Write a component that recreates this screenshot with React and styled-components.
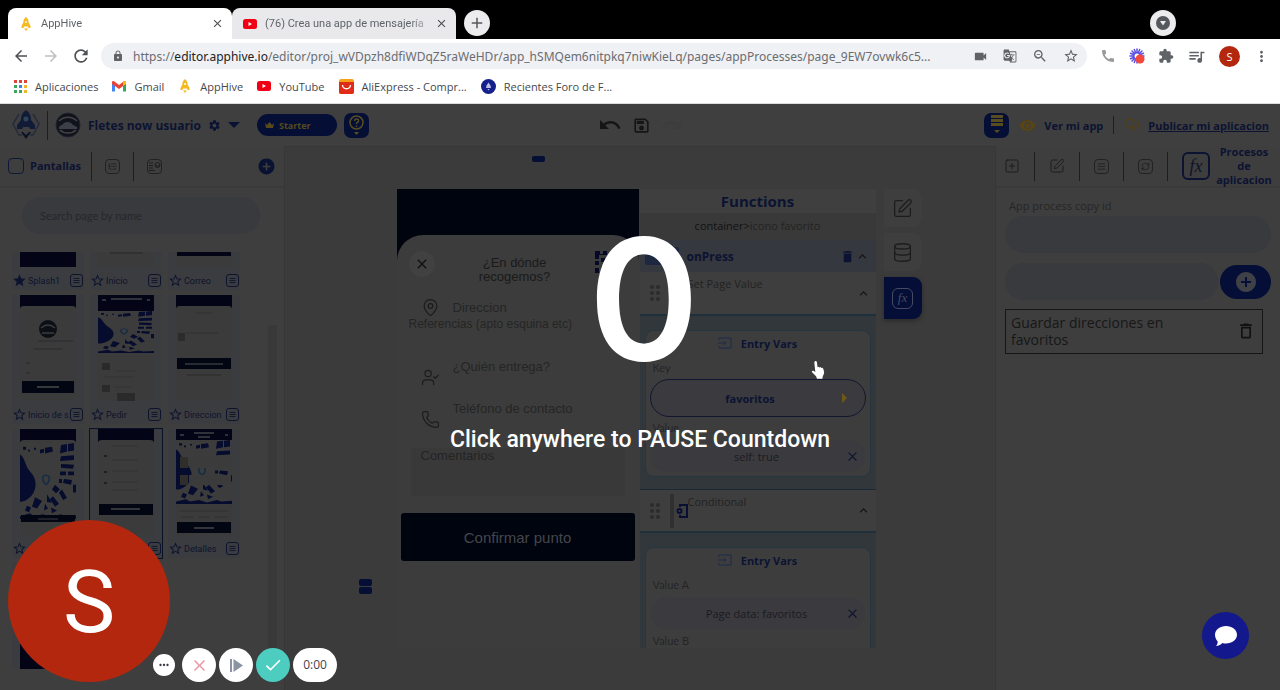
import styled, { createGlobalStyle } from 'styled-components';
import {
  MdAdd,
  MdAddCircle,
  MdArrowBack,
  MdArrowForward,
  MdArrowRight,
  MdCall,
  MdCheck,
  MdClose,
  MdDelete,
  MdDeleteOutline,
  MdDragIndicator,
  MdExtension,
  MdGTranslate,
  MdKeyboardArrowUp,
  MdLock,
  MdMoreHoriz,
  MdMoreVert,
  MdOutlineSave,
  MdQueueMusic,
  MdRefresh,
  MdSettings,
  MdStar,
  MdStarBorder,
  MdVideocam,
  MdVisibility,
  MdZoomOut,
  MdRedo,
  MdUndo,
} from 'react-icons/md';
import {
  CloudUpload,
  Database,
  ListTree,
  MapPin,
  Phone,
  RefreshCw,
  SquarePen,
  SquarePlus,
  TextAlignJustify,
  UserCheck,
} from 'lucide-react';

const PAGES = [
  [
    { name: 'Splash1', kind: 'splash', fav: true },
    { name: 'Inicio', kind: 'blank' },
    { name: 'Correo', kind: 'mail' },
  ],
  [
    { name: 'Inicio de s', kind: 'login' },
    { name: 'Pedir', kind: 'order' },
    { name: 'Direccion', kind: 'address' },
  ],
  [
    { name: '', kind: 'map' },
    { name: '', kind: 'point', active: true },
    { name: 'Detalles', kind: 'details' },
  ],
];

function App() {
  return (
    <Page>
      <GlobalStyle />
      <Browser />
      <Editor>
        <TopBar />
        <Work>
          <LeftPanel />
          <Canvas />
          <RightPanel />
        </Work>
        <Countdown type="button">
          <Count>0</Count>
          <CountText>Click anywhere to PAUSE Countdown</CountText>
        </Countdown>
        <Pointer viewBox="0 0 16 20">
          <path
            d="M4 1c1-1 2-.5 2.300.7L7 7l1-.6 1 .8 1.200-.4.9 1 1.200-.2.9 1.300.8 3.500c0 2-1 3-1.500 4.600l-.3 2.200H6.300L5.600 17 1.200 12.300c-.8-1 .3-2 1.400-1.500l2 1.200L3.500 2z"
            fill="#fff"
          />
        </Pointer>
        <Recorder />
        <Chat type="button" aria-label="Chat">
          <svg width="22" height="20" viewBox="0 0 22 20" fill="#fff">
            <path d="M11 0c6 0 11 3.800 11 8.700s-5 8.700-11 8.700c-1.300 0-2.500-.1-3.600-.5C5.800 18.600 3.800 19.600 1 20c1.400-1.500 1.800-3 1.600-4.800C1 13.600 0 11.200 0 8.700 0 3.800 5 0 11 0z" />
          </svg>
        </Chat>
      </Editor>
    </Page>
  );
}
export default App;

function Rocket({ size }) {
  return (
    <svg width={size} height={size} viewBox="0 0 14 14" fill="#f5b921">
      <path d="M7 0c2 1.500 2.600 3.300 2.600 5.300L11.500 9v2H9.500L9 9.500H5L4.500 11h-2V9l1.900-3.700C4.400 3.300 5 1.500 7 0zM5 11.500h4L7 14z" />
      <circle cx="7" cy="5" r="1" fill="#fff" />
    </svg>
  );
}

function YouTube() {
  return (
    <svg width="14" height="10" viewBox="0 0 14 10">
      <rect width="14" height="10" rx="2.500" fill="#f00014" />
      <path d="M5.500 3l3.500 2-3.500 2z" fill="#fff" />
    </svg>
  );
}

function Browser() {
  return (
    <header>
      <TabStrip>
        <Tab $active>
          <Rocket size={14} />
          <TabName type="button">AppHive</TabName>
          <TabClose type="button" aria-label="Close tab">
            <MdClose size={13} />
          </TabClose>
        </Tab>
        <Tab>
          <YouTube />
          <TabName type="button">(76) Crea una app de mensajería</TabName>
          <TabClose type="button" aria-label="Close tab">
            <MdClose size={13} />
          </TabClose>
        </Tab>
        <RoundButton type="button" aria-label="New tab">
          <MdAdd size={18} />
        </RoundButton>
        <Spacer />
        <RoundButton type="button" aria-label="Search tabs" $edge>
          <svg width="14" height="14" viewBox="0 0 14 14">
            <circle cx="7" cy="7" r="7" fill="#55585c" />
            <path d="M4 5h6L7 9.500z" fill="#ececee" />
          </svg>
        </RoundButton>
      </TabStrip>
      <Toolbar>
        <ToolButton type="button" aria-label="Back">
          <MdArrowBack size={18} />
        </ToolButton>
        <ToolButton type="button" aria-label="Forward" $faint>
          <MdArrowForward size={18} />
        </ToolButton>
        <ToolButton type="button" aria-label="Reload">
          <MdRefresh size={20} />
        </ToolButton>
        <AddressBar>
          <MdLock size={12} />
          <Address type="button">
            https://<b>editor.apphive.io</b>
            /editor/proj_wVDpzh8dfiWDqZ5raWeHDr/app_hSMQem6nitpkq7niwKieLq/pages/appProcesses/page_9EW7ovwk6c5...
          </Address>
          <AddressIcons>
            <MdVideocam size={15} />
            <MdGTranslate size={14} />
            <MdZoomOut size={16} />
            <MdStarBorder size={16} />
          </AddressIcons>
        </AddressBar>
        <Extensions>
          <MdCall size={16} color="#9a9a9a" />
          <svg width="16" height="16" viewBox="0 0 16 16">
            <g stroke="#5a4fe0" strokeWidth="1.500" strokeLinecap="round">
              <path d="M8 1v14M1 8h14M3 3l10 10M13 3L3 13M5.300 1.500l5.400 13M1.500 5.300l13 5.400M10.700 1.500l-5.400 13M1.500 10.700l13-5.400" />
            </g>
            <circle cx="8" cy="8" r="2.500" fill="#fff" />
            <circle cx="11" cy="11" r="4.500" fill="#f34a3d" />
          </svg>
          <MdExtension size={16} />
          <MdQueueMusic size={19} />
          <Profile type="button">S</Profile>
          <MdMoreVert size={17} />
        </Extensions>
      </Toolbar>
      <Bookmarks>
        <Bookmark href="#apps">
          <svg width="13" height="13" viewBox="0 0 13 13">
            <path d="M0 0h3v3H0zM5 0h3v3H5zM10 0h3v3h-3z" fill="#e0453a" />
            <path d="M0 5h3v3H0z" fill="#3ba55c" />
            <path d="M5 5h3v3H5z" fill="#3f83ec" />
            <path d="M10 5h3v3h-3zM10 10h3v3h-3z" fill="#f0b52b" />
            <path d="M0 10h3v3H0zM5 10h3v3H5z" fill="#3ba55c" />
          </svg>
          Aplicaciones
        </Bookmark>
        <Bookmark href="#gmail">
          <svg width="14" height="11" viewBox="0 0 14 11">
            <path d="M0 2v8.500h3V4z" fill="#4285f4" />
            <path d="M14 2v8.500h-3V4z" fill="#34a853" />
            <path d="M0 1.500C0 0 1.500-.3 2.500.6L7 4 11.500.6C12.500-.3 14 0 14 1.500V3L7 8 0 3z" fill="#ea4335" />
            <path d="M11 1l.5-.4C12.500-.3 14 0 14 1.500V3l-3 2z" fill="#fbbc04" />
          </svg>
          Gmail
        </Bookmark>
        <Bookmark href="#apphive">
          <Rocket size={14} />
          AppHive
        </Bookmark>
        <Bookmark href="#youtube">
          <YouTube />
          YouTube
        </Bookmark>
        <Bookmark href="#aliexpress">
          <svg width="15" height="15" viewBox="0 0 15 15">
            <rect width="15" height="15" rx="2" fill="#f5a11c" />
            <path d="M0 3h15v10a2 2 0 0 1-2 2H2a2 2 0 0 1-2-2z" fill="#e02b16" />
            <path d="M3.500 6c.5 5 7.500 5 8 0" fill="none" stroke="#fff" strokeWidth="1.300" />
          </svg>
          AliExpress - Compr...
        </Bookmark>
        <Bookmark href="#foro">
          <svg width="15" height="15" viewBox="0 0 15 15">
            <circle cx="7.500" cy="7.500" r="7.500" fill="#16208c" />
            <path d="M7.500 3.500l2 3 .5 2.500H5l.5-2.500zM6.500 10h2l-1 1.500z" fill="#b9bde8" />
          </svg>
          Recientes Foro de F...
        </Bookmark>
      </Bookmarks>
    </header>
  );
}

function TopBar() {
  return (
    <Top>
      <TopSide>
        <svg width="28" height="30" viewBox="0 0 28 30">
          <path d="M7 4L1 14l6 11h3M21 4l6 10-6 11h-3" fill="none" stroke="#262b3c" strokeWidth="1.500" />
          <path d="M14 0c4 3 5 6 5 10l4 5v4h-5l-1-2h-6l-1 2H5v-4l4-5c0-4 1-7 5-10z" fill="#101b38" />
          <path d="M9 22h2l3 3 3-3h2l-5 7z" fill="#0c1226" />
          <circle cx="14" cy="9" r="2.500" fill="#2c4656" />
        </svg>
        <Divider />
        <svg width="26" height="26" viewBox="0 0 26 26">
          <circle cx="13" cy="13" r="12" fill="#10131c" stroke="#20242f" />
          <path d="M4 9c5-5 13-5 18 0M5 18c4 4 12 4 16 0" fill="none" stroke="#444" strokeWidth="1.500" />
          <path d="M4 15c1-2 4-2 5-4 3-2 7-1 9 2l4 2v2H4z" fill="#3c3f45" />
        </svg>
        <ProjectName>Fletes now usuario</ProjectName>
        <PlainButton type="button" aria-label="Settings">
          <MdSettings size={13} />
        </PlainButton>
        <PlainButton type="button" aria-label="Projects">
          <svg width="12" height="6" viewBox="0 0 12 6" fill="currentColor">
            <path d="M0 0h12L6 6z" />
          </svg>
        </PlainButton>
        <Plan type="button">
          <svg width="9" height="7" viewBox="0 0 9 7" fill="#574a1c">
            <path d="M0 1l2 2 2.500-3L7 3l2-2-1 5H1z" />
          </svg>
          Starter
        </Plan>
        <Square type="button" aria-label="Help">
          <svg width="17" height="21" viewBox="0 0 17 21" fill="none" stroke="#574e22" strokeWidth="1.500">
            <circle cx="8.500" cy="7.500" r="6.500" />
            <path d="M6.500 6c0-3 4.500-2.500 4 0-.3 1.300-2 1.200-2 3M8.500 10.500V12" />
            <path d="M6 17h5l-2.500 3z" fill="#574e22" stroke="none" />
          </svg>
        </Square>
      </TopSide>
      <History>
        <MdUndo size={24} />
        <MdOutlineSave size={19} />
        <MdRedo size={22} color="#3d3d3d" />
      </History>
      <TopSide $end>
        <Square type="button" aria-label="Data">
          <svg width="14" height="20" viewBox="0 0 14 20" fill="#574c20">
            <path d="M1 0h12v3H1zM1 4h12v3H1zM1 8h12v3H1zM4 15h6l-3 3z" />
          </svg>
        </Square>
        <TopLink href="#ver">
          <MdVisibility size={17} color="#5a4412" />
          Ver mi app
        </TopLink>
        <Divider $short />
        <TopLink href="#publicar" $line>
          <CloudUpload size={16} color="#534018" />
          <span>Publicar mi aplicacion</span>
        </TopLink>
      </TopSide>
    </Top>
  );
}

function MapArt({ y = 0, h = 70 }) {
  return (
    <svg x="0" y={y} width="56" height={h} viewBox="0 0 56 80" preserveAspectRatio="none">
      <rect width="56" height="80" fill="#3c3c3d" />
      <g fill="#060c2d">
        <path d="M0 12c5 3 5 12 10 18 9 9 6 23-1 28-3 3-6 4-9 4z" />
        <path d="M3 4h3v3H3zM8 7h2v2H8zM14 5h2v2h-2zM20 7l4-1v4l-4 1zM25 5l7-1 1 5-8 2zM41 2l6-1v8l-7 2zM48 1l6-1v8l-6 1zM41 14l13-1v5l-14 1zM41 22l13 1-1 4-12-1zM40 30h6v4h-6zM48 30h6v4h-6zM39 38h3v4h-3zM44 38l8 1-1 5-8-2zM35 44l5 5-4 4-4-4zM42 49l5 9-4 2-4-8zM27 54l5 9-5-1zM33 56l6 8-4 3-5-8zM15 57l7 4-5 8-5-2zM25 64l3 5-4 2zM7 66l4 2-2 5-4-2zM31 68l6 3-5 3zM53 44h3v8h-3zM0 77l10-3 4 3 9-2 8 3 10-3 4 2 11-1v4H0z" />
      </g>
      <path d="M26 44c-5-5-4-10 0-10s5 5 0 10z" fill="none" stroke="#162d44" strokeWidth="1.500" />
    </svg>
  );
}

// miniature of every screen, 56x106
function Thumb({ kind }) {
  const sheet = <path d="M0 14q0-3 4-3h48q4 0 4 3v92H0z" fill="#3b3b3c" />;
  const lines = (ys) => ys.map((y) => <path key={y} d={`M14 ${y}h26`} stroke="#323233" />);
  return (
    <svg width="56" height="106" viewBox="0 0 56 106">
      <rect width="56" height="106" fill={kind === 'blank' || kind === 'mail' ? '#3b3b3c' : '#030516'} />
      {kind === 'blank' && <path d="M12 92h33" stroke="#313133" strokeWidth="2" />}
      {kind === 'mail' && <path d="M1 90h54v5H1z" fill="#030516" />}
      {kind === 'login' && (
        <>
          {sheet}
          <circle cx="28" cy="34" r="9" fill="#0c0f16" />
          <path d="M21 33q7-6 14 0M22 38h12" stroke="#3c3c3c" strokeWidth="1.500" fill="none" />
          <path d="M18 46h35M14 54h28M6 68h4M6 78h4" stroke="#2a2b2d" strokeWidth="1" />
          <path d="M2 86h52v12H2z" fill="#020512" />
          <path d="M17 92h22" stroke="#36383c" strokeWidth="2" />
        </>
      )}
      {kind === 'order' && (
        <>
          {sheet}
          <path d="M0 0h56v16H0z" fill="#030516" />
          <path d="M13 4h31M4 5h4M49 5h3" stroke="#3e4148" strokeWidth="1.500" />
          <MapArt y={16} h={42} />
          <path d="M4 68h8v7H4zM4 90h8v7H4zM19 98h18v8H19z" fill="#2a2a2b" />
          <path d="M18 76h20M6 82h30M16 92h18" stroke="#343435" />
        </>
      )}
      {kind === 'address' && (
        <>
          {sheet}
          <path d="M20 18h16M10 38h32" stroke="#303031" />
          <path d="M2 38h7v8H2z" fill="#2b2b2c" />
          <path d="M1 63h54v11H1z" fill="#020512" />
          <path d="M9 69h38" stroke="#36383c" strokeWidth="1.500" />
          <path d="M11 80h34" stroke="#2a2a2a" />
        </>
      )}
      {kind === 'map' && (
        <>
          {sheet}
          <MapArt y={14} h={76} />
          <path d="M1 86h54v7H1z" fill="#020512" />
          <path d="M18 90h20" stroke="#3c3c40" />
          <path d="M0 94h56v12H0z" fill="#3b3b3c" />
        </>
      )}
      {kind === 'point' && (
        <>
          {sheet}
          {lines([17, 31, 42, 53, 61])}
          <path d="M6 27h3M6 43h3M6 54h3" stroke="#202022" strokeWidth="2" />
          <path d="M1 75h54v11H1z" fill="#020512" />
          <path d="M13 80h29" stroke="#44464a" strokeWidth="1.500" />
        </>
      )}
      {kind === 'details' && (
        <>
          {sheet}
          <path d="M0 0h56v11H0z" fill="#030516" />
          <path d="M18 4h20M22 8h12M4 6h4M49 6h3" stroke="#3e4148" strokeWidth="1.500" />
          <MapArt y={11} h={64} />
          <path d="M13 28h42v11H13zM13 46h42v10H13z" fill="#3b3b3b" />
          <path d="M4 28h8v11H4zM4 46h8v10H4z" fill="#2f2e2b" />
          <path d="M4 82h48M5 88h13M23 88h10M38 88h14" stroke="#303032" />
          <path d="M1 93h54v11H1z" fill="#020512" />
          <path d="M18 99h20" stroke="#44464a" strokeWidth="1.500" />
        </>
      )}
    </svg>
  );
}

function LeftPanel() {
  return (
    <Side>
      <SideTabs>
        <SideTab type="button" $active>
          <EmptyBox />
          Pantallas
        </SideTab>
        <Divider />
        <SideTab type="button" aria-label="Tree">
          <IconBox $wide>
            <ListTree size={9} />
          </IconBox>
        </SideTab>
        <Divider />
        <SideTab type="button" aria-label="Notes">
          <IconBox $wide>
            <svg width="13" height="11" viewBox="0 0 13 11" fill="none" stroke="currentColor">
              <path d="M1 2h4M1 4.500h4M1 7h4M1 9.500h6M7 5h5" />
              <circle cx="9.500" cy="4" r="2.500" />
            </svg>
          </IconBox>
        </SideTab>
        <Spacer />
        <PlainButton type="button" aria-label="Add page">
          <MdAddCircle size={19} />
        </PlainButton>
      </SideTabs>
      <Search type="search" aria-label="Search page by name" placeholder="Search page by name" />
      <Scroller>
        <Grid>
          {PAGES.map((row, i) =>
            row.map((page) => (
              <Card key={page.kind} type="button" $active={page.active}>
                <Shot $cut={i === 0}>
                  <Thumb kind={page.kind} />
                </Shot>
                <Label>
                  {page.fav ? <MdStar size={15} /> : <MdStarBorder size={15} />}
                  <span>{page.name}</span>
                  <MenuBox>
                    <TextAlignJustify size={7} strokeWidth={3} />
                  </MenuBox>
                </Label>
              </Card>
            ))
          )}
          <Card type="button" aria-label="Next page">
            <Shot>
              <Thumb kind="splash" />
            </Shot>
          </Card>
        </Grid>
        <Track />
      </Scroller>
    </Side>
  );
}

function Canvas() {
  return (
    <Board>
      <TopHandle />
      <Stage>
        <SideHandle>
          <i />
          <i />
        </SideHandle>
        <PhonePreview />
        <Functions />
        <Tools>
          <Tool type="button" aria-label="Edit">
            <SquarePen size={21} strokeWidth={1.5} />
          </Tool>
          <Tool type="button" aria-label="Data">
            <Database size={21} strokeWidth={1.5} />
          </Tool>
          <Tool type="button" aria-label="Functions" $active>
            <Fx $light>fx</Fx>
          </Tool>
        </Tools>
      </Stage>
    </Board>
  );
}

function PhonePreview() {
  return (
    <PhoneFrame>
      <Sheet>
        <SheetHead>
          <CloseDot type="button" aria-label="Close">
            <MdClose size={16} />
          </CloseDot>
          <SheetTitle>¿En dónde recogemos?</SheetTitle>
          <svg width="22" height="22" viewBox="0 0 22 22">
            <path
              d="M0 0h5v3h3V0h4v4H4v4H0zM0 10h4v4H0zM6 7h4v4H6zM0 17h4v5H0zM6 15h4v4H6z"
              fill="#050826"
            />
          </svg>
        </SheetHead>
        <Field>
          <MapPin size={19} strokeWidth={1.5} />
          <FieldInput aria-label="Direccion" placeholder="Direccion" />
        </Field>
        <Reference aria-label="Referencias" placeholder="Referencias (apto esquina etc)" />
        <Field $tall>
          <UserCheck size={19} strokeWidth={1.5} />
          <FieldInput aria-label="Quién entrega" placeholder="¿Quién entrega?" />
        </Field>
        <Field $tall>
          <Phone size={19} strokeWidth={1.5} />
          <FieldInput aria-label="Teléfono" placeholder="Teléfono de contacto" />
        </Field>
        <Comments aria-label="Comentarios" placeholder="Comentarios" />
        <Confirm type="button">Confirmar punto</Confirm>
      </Sheet>
    </PhoneFrame>
  );
}

function EntryIcon() {
  return (
    <svg width="14" height="12" viewBox="0 0 14 12" fill="none" stroke="#1d2b4a">
      <path d="M1 3V1h12v10H1V9M0 6h8M6 4l2 2-2 2" />
    </svg>
  );
}

function Functions() {
  return (
    <FnPanel>
      <FnTitle>Functions</FnTitle>
      <Crumb>
        container&gt;<span>icono favorito</span>
      </Crumb>
      <EventRow>
        <Toggle />
        <strong>onPress</strong>
        <MdDelete size={15} />
        <MdKeyboardArrowUp size={15} color="#161616" />
      </EventRow>
      <Step name="Set Page Value" />
      <StepBody>
        <VarCard>
          <VarHead>
            <EntryIcon />
            Entry Vars
          </VarHead>
          <VarLabel>Key</VarLabel>
          <VarButton type="button" $outlined>
            <span>favoritos</span>
            <MdArrowRight size={24} />
          </VarButton>
          <VarLabel>Value</VarLabel>
          <VarButton type="button">
            <span>self: true</span>
            <MdClose size={15} />
          </VarButton>
        </VarCard>
      </StepBody>
      <Step name="Conditional" ruled />
      <StepBody>
        <VarCard>
          <VarHead>
            <EntryIcon />
            Entry Vars
          </VarHead>
          <VarLabel>Value A</VarLabel>
          <VarButton type="button">
            <span>Page data: favoritos</span>
            <MdClose size={15} />
          </VarButton>
          <VarLabel>Value B</VarLabel>
        </VarCard>
      </StepBody>
    </FnPanel>
  );
}

function Step({ name, ruled }) {
  return (
    <StepRow $ruled={ruled}>
      <MdDragIndicator size={24} color="#2c2c2c" />
      <Bar />
      <svg width="12" height="14" viewBox="0 0 12 14" fill="none" stroke="#080f33" strokeWidth="2">
        <path d="M4 3V1h7v12H4v-2" />
        <circle cx="3.500" cy="7" r="2" />
      </svg>
      <StepName>{name}</StepName>
      <MdKeyboardArrowUp size={15} color="#161616" />
    </StepRow>
  );
}

function RightPanel() {
  return (
    <Side $right>
      <SideTabs $right>
        <SideTab type="button" aria-label="Add">
          <SquarePlus size={16} strokeWidth={1.5} />
        </SideTab>
        <Divider />
        <SideTab type="button" aria-label="Edit">
          <SquarePen size={16} strokeWidth={1.5} />
        </SideTab>
        <Divider />
        <SideTab type="button" aria-label="List">
          <IconBox>
            <TextAlignJustify size={9} />
          </IconBox>
        </SideTab>
        <Divider />
        <SideTab type="button" aria-label="Sync">
          <IconBox>
            <RefreshCw size={9} />
          </IconBox>
        </SideTab>
        <Divider />
        <SideTab type="button" $active $wrap>
          <Fx>fx</Fx>
          <span>Procesos de aplicacion</span>
        </SideTab>
      </SideTabs>
      <Process>
        <label htmlFor="copy">App process copy id</label>
        <ProcessInput id="copy" />
        <ProcessRow>
          <ProcessInput aria-label="Process name" />
          <AddProcess type="button" aria-label="Add process">
            <MdAddCircle size={24} />
          </AddProcess>
        </ProcessRow>
        <ProcessItem>
          <span>Guardar direcciones en favoritos</span>
          <PlainButton type="button" aria-label="Delete process" $dark>
            <MdDeleteOutline size={20} />
          </PlainButton>
        </ProcessItem>
      </Process>
    </Side>
  );
}

function Recorder() {
  return (
    <RecorderBox>
      <Camera>S</Camera>
      <Controls>
        <RecButton type="button" aria-label="More" $small>
          <MdMoreHoriz size={14} />
        </RecButton>
        <RecButton type="button" aria-label="Cancel" $color="#eb9aa9">
          <MdClose size={19} />
        </RecButton>
        <RecButton type="button" aria-label="Resume" $color="#8a94a3">
          <svg width="13" height="13" viewBox="0 0 13 13" fill="#8a94a3">
            <path d="M0 0h2v13H0zM3.500 0L13 6.500 3.500 13z" />
          </svg>
        </RecButton>
        <RecButton type="button" aria-label="Finish" $color="#fff" $bg="#4ccdc0">
          <MdCheck size={20} />
        </RecButton>
        <Timer>0:00</Timer>
      </Controls>
    </RecorderBox>
  );
}

const GlobalStyle = createGlobalStyle`
  * {
    box-sizing: border-box;
  }
  body {
    margin: 0;
    background: #3d3d3d;
    font-family: "Open Sans", "Noto Sans", sans-serif;
  }
  button, input, textarea {
    font-family: inherit;
    padding: 0;
    border: 0;
    background: none;
  }
  svg {
    flex-shrink: 0;
    display: block;
  }
`;
const Page = styled.div`
  min-height: 100vh;
  display: flex;
  flex-direction: column;
`;
const Spacer = styled.div`
  flex: 1;
`;

/* browser */
const TabStrip = styled.div`
  height: 39px;
  padding: 8px 8px 0;
  display: flex;
  background: #000;
`;
const Tab = styled.div`
  width: 224px;
  display: flex;
  align-items: center;
  padding: 0 8px 0 11px;
  border-radius: 8px 8px 0 0;
  background: ${({ $active }) => ($active ? '#fff' : '#e9e9eb')};
`;
const TabName = styled.button`
  flex: 1;
  min-width: 0;
  margin: 0 6px 0 8px;
  overflow: hidden;
  white-space: nowrap;
  text-align: left;
  font-family: Roboto, "Open Sans", sans-serif;
  font-size: 11px;
  color: #5f6368;
  mask-image: linear-gradient(90deg, #000 88%, transparent 105%);
`;
const TabClose = styled.button`
  color: #4a4d51;
`;
const RoundButton = styled.button`
  width: 26px;
  height: 26px;
  margin: 2px ${({ $edge }) => ($edge ? '96px' : '8px')} 0;
  display: flex;
  align-items: center;
  justify-content: center;
  border-radius: 50%;
  background: #ececee;
  color: #55585c;
`;
const Toolbar = styled.div`
  height: 34px;
  padding: 0 10px 0 9px;
  display: flex;
  align-items: center;
  background: #fff;
`;
const ToolButton = styled.button`
  width: 30px;
  display: flex;
  justify-content: center;
  margin-left: -3px;
  margin-right: 3px;
  color: ${({ $faint }) => ($faint ? '#c0c0c0' : '#4d5054')};
`;
const AddressBar = styled.div`
  flex: 1;
  min-width: 0;
  height: 26px;
  margin-left: 2px;
  padding: 0 8px 0 11px;
  display: flex;
  align-items: center;
  gap: 9px;
  border-radius: 13px;
  background: #f0f1f4;
  color: #5f6368;
`;
const Address = styled.button`
  flex: 1;
  min-width: 0;
  overflow: hidden;
  white-space: nowrap;
  text-align: left;
  font-family: "Noto Sans", sans-serif;
  font-size: 12px;
  color: #6a6d72;
  b {
    font-weight: 400;
    color: #202124;
  }
`;
const AddressIcons = styled.div`
  display: flex;
  align-items: center;
  gap: 15px;
`;
const Extensions = styled.div`
  display: flex;
  align-items: center;
  gap: 13px;
  margin-left: 13px;
  color: #5f6368;
`;
const Profile = styled.button`
  width: 21px;
  height: 21px;
  border-radius: 50%;
  background: #b3270e;
  color: #fff;
  font-size: 11px;
`;
const Bookmarks = styled.nav`
  height: 31px;
  padding: 0 14px 4px;
  display: flex;
  align-items: center;
  gap: 14px;
  background: #fff;
  border-bottom: 1px solid #dcdcdc;
`;
const Bookmark = styled.a`
  display: flex;
  align-items: center;
  gap: 8px;
  font-size: 11px;
  color: #45484c;
  text-decoration: none;
`;

/* editor */
const Editor = styled.main`
  flex: 1;
  position: relative;
  display: flex;
  flex-direction: column;
  background: #3d3d3d;
  color: #0c1332;
`;
const Top = styled.div`
  height: 42px;
  padding: 0 11px 0 12px;
  display: grid;
  grid-template-columns: 1fr auto 1fr;
  align-items: center;
  background: #3f3f3f;
`;
const TopSide = styled.div`
  display: flex;
  align-items: center;
  gap: ${({ $end }) => ($end ? '10px' : '7px')};
  justify-content: ${({ $end }) => ($end ? 'flex-end' : 'flex-start')};
`;
const Divider = styled.span`
  width: 1px;
  height: ${({ $short }) => ($short ? '18px' : '29px')};
  background: #1e1e20;
`;
const ProjectName = styled.strong`
  font-size: 12px;
  white-space: nowrap;
`;
const PlainButton = styled.button`
  color: ${({ $dark }) => ($dark ? '#111' : '#0a1233')};
`;
const Plan = styled.button`
  width: 80px;
  height: 22px;
  margin-left: 10px;
  padding-left: 8px;
  display: flex;
  align-items: center;
  gap: 5px;
  border-radius: 11px;
  background: #050f36;
  color: #574a1c;
  font-size: 9px;
  font-weight: 700;
`;
const Square = styled.button`
  width: 25px;
  height: 25px;
  display: flex;
  align-items: center;
  justify-content: center;
  border-radius: 7px;
  background: #050f36;
`;
const History = styled.div`
  display: flex;
  align-items: center;
  gap: 10px;
  color: #151515;
`;
const TopLink = styled.a`
  display: flex;
  align-items: center;
  gap: 8px;
  font-size: 11px;
  font-weight: 700;
  white-space: nowrap;
  color: #0c1332;
  text-decoration: none;
  span {
    text-decoration: ${({ $line }) => ($line ? 'underline' : 'none')};
  }
`;
const Work = styled.div`
  flex: 1;
  display: flex;
`;
const Side = styled.aside`
  width: 285px;
  flex-shrink: 0;
  background: #3e3e3e;
  border: 0 solid #373737;
  border-width: ${({ $right }) => ($right ? '0 0 0 1px' : '0 1px 0 0')};
`;
const SideTabs = styled.div`
  height: 42px;
  padding: 0 8px;
  display: flex;
  align-items: center;
  gap: ${({ $right }) => ($right ? '14px' : '10px')};
  border-bottom: 2px solid #3a3a3a;
`;
const SideTab = styled.button`
  display: flex;
  align-items: center;
  gap: 6px;
  font-size: 11px;
  font-weight: 700;
  line-height: 14px;
  color: ${({ $active }) => ($active ? '#0c1332' : '#1d1d1f')};
  ${({ $wrap }) => $wrap && 'flex: 1; min-width: 0;'}
`;
const EmptyBox = styled.span`
  width: 16px;
  height: 16px;
  border: 1px solid #10183a;
  border-radius: 4px;
`;
const IconBox = styled.span`
  width: 15px;
  height: 15px;
  margin: 0 ${({ $wide }) => ($wide ? '3px' : '0')};
  display: flex;
  align-items: center;
  justify-content: center;
  border: 1px solid #222;
  border-radius: 4px;
`;
const Search = styled.input`
  width: 238px;
  height: 37px;
  margin: 9px 22px 18px;
  padding: 0 18px;
  display: block;
  border-radius: 19px;
  background: #393a3e;
  font-family: Lato, "Open Sans", sans-serif;
  font-size: 11px;
  &::placeholder {
    color: #26262a;
    opacity: 1;
  }
`;
const Scroller = styled.div`
  display: flex;
  justify-content: space-between;
  padding: 0 7px 0 12px;
`;
const Grid = styled.div`
  display: grid;
  grid-template-columns: repeat(3, 72px);
  gap: 5px 6px;
`;
const Card = styled.button`
  display: block;
  background: #3b3c40;
  outline: ${({ $active }) => ($active ? '1px solid #0b1029' : 'none')};
`;
const Shot = styled.div`
  height: ${({ $cut }) => ($cut ? '15px' : '106px')};
  display: flex;
  justify-content: center;
  align-items: flex-end;
  overflow: hidden;
`;
const Label = styled.div`
  height: 23px;
  padding-top: 4px;
  display: flex;
  align-items: center;
  gap: 1px;
  font-size: 9px;
  font-family: Roboto, sans-serif;
  color: #0d132c;
  span {
    white-space: nowrap;
  }
`;
const MenuBox = styled.i`
  width: 13px;
  height: 13px;
  margin-left: auto;
  margin-right: 1px;
  display: flex;
  align-items: center;
  justify-content: center;
  border: 1px solid #0d132c;
  border-radius: 3px;
`;
const Track = styled.div`
  width: 9px;
  margin: 73px 0 20px;
  background: #393939;
`;

/* canvas */
const Board = styled.section`
  flex: 1;
  min-width: 0;
  padding: 9px 0 40px;
  background: #3b3b3b;
  border-top: 1px solid #373737;
`;
const TopHandle = styled.div`
  width: 13px;
  height: 6px;
  margin: 0 auto 27px;
  border-radius: 2px;
  background: #050f36;
  position: relative;
  right: 102px;
`;
const Stage = styled.div`
  display: flex;
  justify-content: center;
`;
const SideHandle = styled.div`
  align-self: flex-end;
  margin: 0 25px 54px 0;
  i {
    display: block;
    width: 13px;
    height: 7px;
    margin-top: 1px;
    border-radius: 2px;
    background: #050f36;
  }
`;
const PhoneFrame = styled.div`
  width: 242px;
  height: 459px;
  padding-top: 46px;
  background: linear-gradient(#00040f 90px, #3a3a3a 90px);
  font-family: "Liberation Sans", Arial, sans-serif;
`;
const Sheet = styled.div`
  height: 100%;
  padding: 16px 4px 0;
  border-radius: 26px 26px 0 0;
  background: #3c3c3c;
`;
const SheetHead = styled.div`
  display: flex;
  justify-content: space-between;
  align-items: flex-start;
  padding: 0 18px 0 8px;
  height: 47px;
`;
const CloseDot = styled.button`
  width: 26px;
  height: 26px;
  display: flex;
  align-items: center;
  justify-content: center;
  border-radius: 50%;
  background: #414141;
  color: #101010;
`;
const SheetTitle = styled.div`
  width: 90px;
  padding-top: 5px;
  font-size: 13px;
  line-height: 14px;
  text-align: center;
  color: #1a1a1a;
`;
const Field = styled.label`
  height: ${({ $tall }) => ($tall ? '42px' : '18px')};
  padding: 0 18px 0 20px;
  display: flex;
  align-items: ${({ $tall }) => ($tall ? 'flex-end' : 'center')};
  gap: 13px;
  color: #1c1c1c;
`;
const FieldInput = styled.input`
  flex: 1;
  min-width: 0;
  font-size: 13px;
  align-self: center;
  &::placeholder {
    color: #252525;
    opacity: 1;
  }
`;
const Reference = styled.input`
  width: 100%;
  height: 16px;
  margin-bottom: 13px;
  padding-left: 8px;
  display: block;
  font-size: 12px;
  &::placeholder {
    color: #252525;
    opacity: 1;
  }
`;
const Comments = styled.textarea`
  width: 214px;
  height: 48px;
  margin: 19px 10px 17px;
  padding-left: 10px;
  display: block;
  resize: none;
  font-size: 13px;
  background: #393939;
  &::placeholder {
    color: #242424;
    opacity: 1;
  }
`;
const Confirm = styled.button`
  width: 100%;
  height: 48px;
  border-radius: 3px;
  background: #00040f;
  color: #45464b;
  font-size: 15px;
`;
const FnPanel = styled.div`
  width: 236px;
  height: 459px;
  margin-left: 1px;
  overflow: hidden;
`;
const FnTitle = styled.h2`
  height: 24px;
  margin: 0;
  font-size: 15px;
  line-height: 24px;
  text-align: center;
  background: #3f3f3f;
`;
const Crumb = styled.div`
  height: 27px;
  font-size: 11px;
  line-height: 26px;
  text-align: center;
  color: #121212;
  background: #393939;
  span {
    color: #232323;
  }
`;
const EventRow = styled.div`
  height: 32px;
  padding: 0 6px 0 5px;
  display: flex;
  align-items: center;
  background: #35383e;
  font-size: 12px;
  strong {
    flex: 1;
    margin-left: 8px;
  }
`;
const Toggle = styled.span`
  width: 34px;
  height: 18px;
  border-radius: 2px;
  background: #1d2840;
`;
const StepRow = styled.div`
  height: 44px;
  padding: 0 5px 0 3px;
  display: flex;
  align-items: center;
  border-bottom: 2px solid #20303b;
  border-top: ${({ $ruled }) => ($ruled ? '1px solid #1c2a38' : 'none')};
  background: #3e3e3e;
`;
const Bar = styled.span`
  width: 4px;
  height: 34px;
  margin: 0 2px 0 3px;
  background: #303030;
`;
const StepName = styled.span`
  flex: 1;
  align-self: flex-start;
  padding-top: 4px;
  font-size: 11px;
  color: #222;
`;
const StepBody = styled.div`
  padding: 14px 5px 12px;
  background: #31373b;
`;
const VarCard = styled.div`
  height: 147px;
  padding: 3px 4px 0;
  border: 1px solid #263641;
  border-radius: 9px;
  background: #3d3d3e;
`;
const VarHead = styled.div`
  height: 18px;
  margin-bottom: 5px;
  display: flex;
  align-items: center;
  justify-content: center;
  gap: 9px;
  font-size: 11px;
  font-weight: 700;
`;
const VarLabel = styled.div`
  height: 22px;
  padding: 3px 3px 0;
  font-size: 11px;
  line-height: 15px;
  font-family: Lato, "Open Sans", sans-serif;
  color: #252525;
`;
const VarButton = styled.button`
  width: 100%;
  height: ${({ $outlined }) => ($outlined ? '38px' : '34px')};
  padding: 0 ${({ $outlined }) => ($outlined ? '9px' : '5px')} 0 18px;
  display: flex;
  align-items: center;
  border: 1px solid ${({ $outlined }) => ($outlined ? '#111732' : 'transparent')};
  border-radius: 19px;
  background: #3a3a3f;
  background-clip: padding-box;
  font-size: 11px;
  font-weight: ${({ $outlined }) => ($outlined ? 700 : 400)};
  color: ${({ $outlined }) => ($outlined ? '#0c1332' : '#1b1b1f')};
  span {
    flex: 1;
  }
  svg {
    color: ${({ $outlined }) => ($outlined ? '#6e5a16' : '#111732')};
  }
`;
const Tools = styled.div`
  margin-left: 8px;
  display: flex;
  flex-direction: column;
  gap: 6px;
`;
const Tool = styled.button`
  width: 38px;
  height: ${({ $active }) => ($active ? '42px' : '38px')};
  display: flex;
  align-items: center;
  justify-content: center;
  border-radius: 0 9px 9px 0;
  color: #1d1d1d;
  background: ${({ $active }) => ($active ? '#040e36' : '#3e3e3e')};
  box-shadow: ${({ $active }) => ($active ? '0 2px 4px #2a2a2a' : 'none')};
`;
const Fx = styled.span`
  width: ${({ $light }) => ($light ? '21px' : '28px')};
  height: ${({ $light }) => ($light ? '21px' : '28px')};
  flex-shrink: 0;
  display: flex;
  align-items: center;
  justify-content: center;
  border: ${({ $light }) => ($light ? '1px solid #454b62' : '2px solid #0c1332')};
  border-radius: 6px;
  color: ${({ $light }) => ($light ? '#454b62' : '#0d142c')};
  font: italic ${({ $light }) => ($light ? '13px' : '18px')} "Liberation Serif", serif;
`;

/* right panel */
const Process = styled.div`
  padding: 10px 9px 0;
  label {
    display: block;
    padding-left: 4px;
    height: 18px;
    font-size: 11px;
    line-height: 15px;
    color: #262626;
  }
`;
const ProcessInput = styled.input`
  width: 100%;
  min-width: 0;
  height: 37px;
  display: block;
  padding: 0 16px;
  border-radius: 19px;
  background: #393a3e;
`;
const ProcessRow = styled.div`
  margin: 10px 0 9px;
  display: flex;
  align-items: center;
  gap: 2px;
`;
const AddProcess = styled.button`
  width: 51px;
  height: 34px;
  flex-shrink: 0;
  display: flex;
  align-items: center;
  justify-content: center;
  border-radius: 17px;
  background: #040e36;
  color: #3f4146;
`;
const ProcessItem = styled.div`
  margin-right: 8px;
  padding: 4px 6px 5px 5px;
  display: flex;
  align-items: center;
  justify-content: space-between;
  border: 1px solid #151515;
  font-size: 14px;
  line-height: 17px;
  color: #171717;
  span {
    width: 180px;
  }
`;

/* overlays */
const Countdown = styled.button`
  position: absolute;
  inset: 0;
  display: flex;
  flex-direction: column;
  align-items: center;
  padding-top: 111px;
  color: #fff;
`;
const Count = styled.span`
  margin-left: 8px;
  font-family: Inter, sans-serif;
  font-weight: 600;
  font-size: 168px;
  line-height: 168px;
`;
const CountText = styled.span`
  margin-top: 43px;
  font-family: Roboto, sans-serif;
  font-weight: 500;
  font-size: 23px;
  line-height: 28px;
`;
const Pointer = styled.svg`
  position: absolute;
  left: 811px;
  top: 256px;
  width: 15px;
  height: 20px;
`;
const RecorderBox = styled.div`
  position: absolute;
  left: 8px;
  bottom: 8px;
  display: flex;
  align-items: flex-end;
`;
const Camera = styled.div`
  width: 162px;
  height: 162px;
  display: flex;
  align-items: center;
  justify-content: center;
  border-radius: 50%;
  background: #b3270e;
  color: #fff;
  font-family: Roboto, sans-serif;
  font-size: 88px;
`;
const Controls = styled.div`
  margin-left: -17px;
  display: flex;
  align-items: center;
  gap: 3px;
`;
const RecButton = styled.button`
  width: ${({ $small }) => ($small ? '22px' : '34px')};
  height: ${({ $small }) => ($small ? '22px' : '34px')};
  margin-right: ${({ $small }) => ($small ? '4px' : '0')};
  display: flex;
  align-items: center;
  justify-content: center;
  border-radius: 50%;
  background: ${({ $bg }) => $bg || '#fff'};
  color: ${({ $color }) => $color || '#3a3a44'};
`;
const Timer = styled.span`
  width: 44px;
  height: 34px;
  border-radius: 17px;
  background: #fff;
  color: #42424e;
  font-size: 12px;
  line-height: 34px;
  text-align: center;
`;
const Chat = styled.button`
  position: absolute;
  right: 31px;
  bottom: 31px;
  width: 47px;
  height: 47px;
  display: flex;
  align-items: center;
  justify-content: center;
  border-radius: 50%;
  background: #13188c;
`;
